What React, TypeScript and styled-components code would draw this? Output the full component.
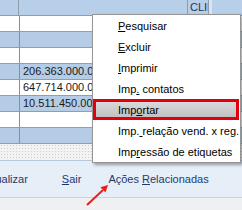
import React from 'react';
import styled, {createGlobalStyle} from "styled-components";

const GlobalStyle = createGlobalStyle`
  html, body {
    margin: 0;
    padding: 0;
    background: #f0f0f0;
  }
  body {
    font-family: "Liberation Sans", Arial, sans-serif;
  }
`;

const Page = styled.div`
  position: relative;
  width: 242px;
  height: 210px;
  overflow: hidden;
  display: flex;
  flex-direction: column;
  background: #eff0f1;
  font-size: 11px;
`;

const Grid = styled.div`
  display: flex;
  flex-direction: column;
  background: #fff;
`;

const HeaderRow = styled.div`
  display: flex;
  height: 15px;
  background: #b8cfe9;
  border-bottom: 1px solid #9a9a9a;
`;

const HeadCell = styled.div<{ $w?: number }>`
  ${p => p.$w ? `width: ${p.$w}px;` : 'flex: 1;'}
  flex-shrink: 0;
  box-sizing: border-box;
  border-right: 1px solid #8f9cab;
  padding-left: 2px;
  line-height: 15px;
  color: #1d3557;
  white-space: nowrap;
  overflow: hidden;
  &:last-child {
    border-right: none;
  }
`;

const HeadGrip = styled.div`
  width: 3px;
  flex-shrink: 0;
  background: #d6e4f3;
`;

const BodyRow = styled.div<{ $alt: boolean }>`
  display: flex;
  height: 15px;
  background: ${p => p.$alt ? '#b5cce7' : '#ffffff'};
  border-bottom: 1px solid #9c9c9c;
`;

const IndexCell = styled.div`
  width: 19px;
  flex-shrink: 0;
  border-right: 1px solid #8e8e8e;
`;

const ValueCell = styled.div`
  flex: 1;
  padding-left: 3px;
  line-height: 15px;
  color: #1a1a1a;
  white-space: nowrap;
  overflow: hidden;
`;

const Filler = styled.div`
  height: 16px;
  background-color: #f3f3f3;
  background-image: radial-gradient(#cdcdcd 0.7px, transparent 0.9px);
  background-size: 3px 3px;
`;

const Footer = styled.div`
  height: 36px;
  display: flex;
  align-items: center;
  background: #e6eef8;
  border-top: 1px solid #b7c8dc;
  border-bottom: 1px solid #c9d4df;
  white-space: nowrap;
`;

const FooterLink = styled.span<{ $ml: number }>`
  margin-left: ${p => p.$ml}px;
  color: #1f3b6e;
  font-size: 11px;
  flex-shrink: 0;
`;

const Menu = styled.div`
  position: absolute;
  left: 92px;
  top: 14px;
  width: 149px;
  box-sizing: border-box;
  background: #fff;
  border: 1px solid #959595;
  box-shadow: 2px 2px 3px rgba(0, 0, 0, 0.35);
  display: flex;
  flex-direction: column;
`;

const MenuItem = styled.div<{ $active?: boolean }>`
  height: 21px;
  box-sizing: border-box;
  display: flex;
  align-items: center;
  padding-left: ${p => p.$active ? 22 : 25}px;
  color: #000;
  font-size: 11px;
  white-space: nowrap;
  ${p => p.$active && `
    border: 3px solid #e1000e;
    margin-right: 1px;
    background: linear-gradient(#d9d9d9, #c2c2c2);
  `}
`;

const Arrow = styled.svg`
  position: absolute;
  left: 0;
  top: 0;
  pointer-events: none;
`;

const numbers = ['', '', '', '206.363.000.00', '647.714.000.00', '10.511.450.000', '', ''];

const App: React.FC = () => {
  return (
      <Page>
        <GlobalStyle/>
        <Grid>
          <HeaderRow>
            <HeadCell $w={19}/>
            <HeadCell $w={169}/>
            <HeadCell $w={21}>CLIENTE</HeadCell>
            <HeadGrip/>
            <HeadCell/>
          </HeaderRow>
          {numbers.map((n, i) => (
              <BodyRow key={i} $alt={i % 2 === 1}>
                <IndexCell/>
                <ValueCell>{n}</ValueCell>
              </BodyRow>
          ))}
        </Grid>
        <Filler/>
        <Footer>
          <FooterLink $ml={-15}>Atualizar</FooterLink>
          <FooterLink $ml={34}><u>S</u>air</FooterLink>
          <FooterLink $ml={27}>Ações <u>R</u>elacionadas</FooterLink>
        </Footer>
        <Menu>
          <MenuItem><span><u>P</u>esquisar</span></MenuItem>
          <MenuItem><span><u>E</u>xcluir</span></MenuItem>
          <MenuItem><span><u>I</u>mprimir</span></MenuItem>
          <MenuItem><span>Imp<u>.</u> contatos</span></MenuItem>
          <MenuItem $active><span>Imp<u>o</u>rtar</span></MenuItem>
          <MenuItem><span>Imp.<u>&nbsp;</u>relação vend. x reg.</span></MenuItem>
          <MenuItem><span>Imp<u>r</u>essão de etiquetas</span></MenuItem>
        </Menu>
        <Arrow width="242" height="210" viewBox="0 0 242 210">
          <line x1="87" y1="205" x2="103" y2="190" stroke="#e3211c" strokeWidth="2"/>
          <polygon points="108,185 105.6,192.6 100.4,187.2" fill="#e3211c"/>
        </Arrow>
      </Page>
  );
};

export default App;
